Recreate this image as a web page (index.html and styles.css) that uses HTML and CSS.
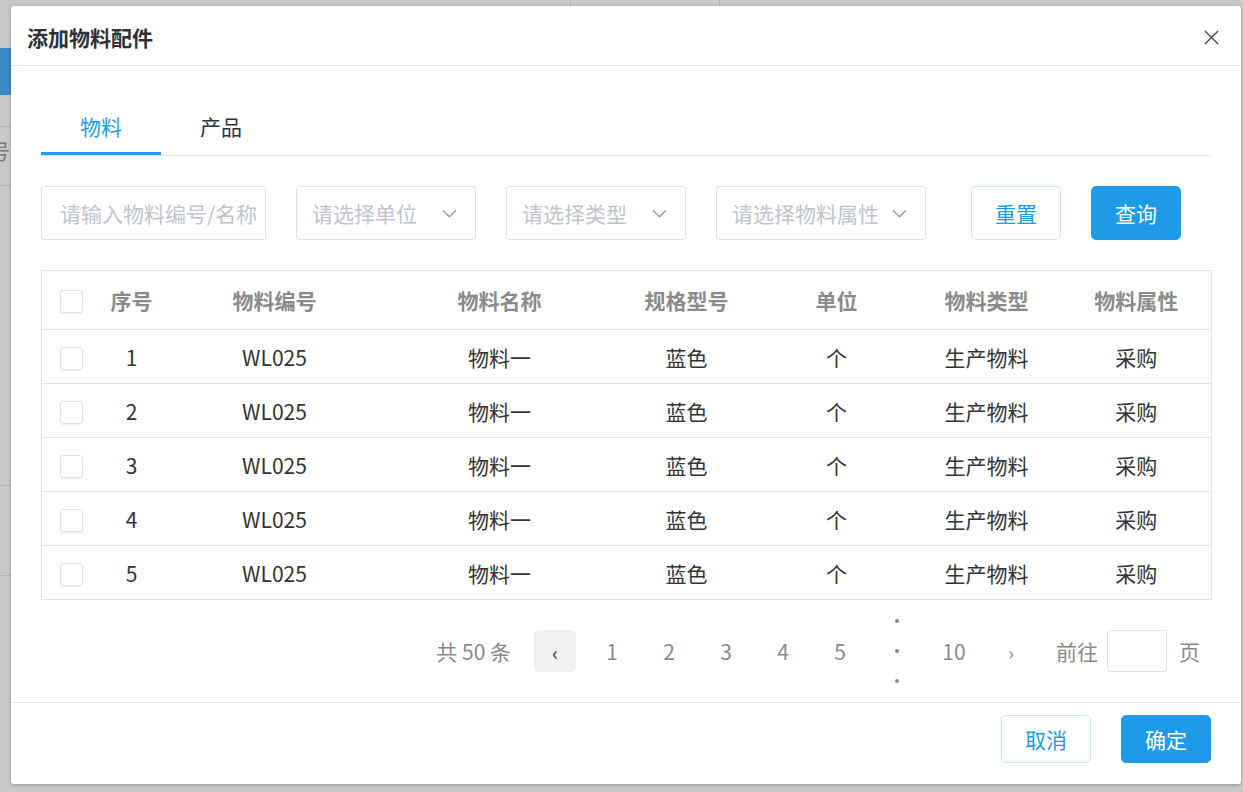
FILE: index.html
```html
<!DOCTYPE html>
<html lang="zh-CN">
<head>
<meta charset="utf-8">
<title>添加物料配件</title>
<link rel="stylesheet" href="styles.css">
</head>
<body>
<div class="backdrop">
  <div class="bg-blue"></div>
  <div class="bg-line bg-l1"></div>
  <div class="bg-text">号</div>
  <div class="bg-line bg-l2"></div>
  <div class="bg-line bg-l3"></div>
  <div class="bg-line bg-l4"></div>
  <div class="bg-vline bg-v1"></div>
  <div class="bg-vline bg-v2"></div>
</div>

<div class="modal">
  <div class="modal-header">
    <div class="modal-title">添加物料配件</div>
    <svg class="close" width="16" height="16" viewBox="0 0 16 16"><path d="M1 1L15 15M15 1L1 15" stroke="#444" stroke-width="1.4" fill="none"/></svg>
  </div>

  <div class="modal-body">
    <div class="tabs">
      <div class="tab active">物料</div>
      <div class="tab">产品</div>
    </div>

    <div class="filters">
      <div class="field w225"><span class="ph">请输入物料编号/名称</span></div>
      <div class="field select w180"><span class="ph">请选择单位</span><svg class="chev" width="16" height="9" viewBox="0 0 16 9"><path d="M1 1L8 8L15 1" stroke="#999" stroke-width="1.3" fill="none"/></svg></div>
      <div class="field select w180"><span class="ph">请选择类型</span><svg class="chev" width="16" height="9" viewBox="0 0 16 9"><path d="M1 1L8 8L15 1" stroke="#999" stroke-width="1.3" fill="none"/></svg></div>
      <div class="field select w210"><span class="ph">请选择物料属性</span><svg class="chev" width="16" height="9" viewBox="0 0 16 9"><path d="M1 1L8 8L15 1" stroke="#999" stroke-width="1.3" fill="none"/></svg></div>
      <div class="btn btn-plain reset">重置</div>
      <div class="btn btn-primary">查询</div>
    </div>

    <table class="grid">
      <colgroup>
        <col class="c-chk"><col class="c-no"><col class="c-code"><col class="c-name"><col class="c-150"><col class="c-150"><col class="c-150"><col class="c-150">
      </colgroup>
      <thead>
        <tr><th><span class="chk"></span></th><th>序号</th><th>物料编号</th><th>物料名称</th><th>规格型号</th><th>单位</th><th>物料类型</th><th>物料属性</th></tr>
      </thead>
      <tbody>
        <tr><td><span class="chk"></span></td><td>1</td><td>WL025</td><td>物料一</td><td>蓝色</td><td>个</td><td>生产物料</td><td>采购</td></tr>
        <tr><td><span class="chk"></span></td><td>2</td><td>WL025</td><td>物料一</td><td>蓝色</td><td>个</td><td>生产物料</td><td>采购</td></tr>
        <tr><td><span class="chk"></span></td><td>3</td><td>WL025</td><td>物料一</td><td>蓝色</td><td>个</td><td>生产物料</td><td>采购</td></tr>
        <tr><td><span class="chk"></span></td><td>4</td><td>WL025</td><td>物料一</td><td>蓝色</td><td>个</td><td>生产物料</td><td>采购</td></tr>
        <tr><td><span class="chk"></span></td><td>5</td><td>WL025</td><td>物料一</td><td>蓝色</td><td>个</td><td>生产物料</td><td>采购</td></tr>
      </tbody>
    </table>

    <div class="pager">
      <span class="total">共 50 条</span>
      <div class="pages">
        <span class="pg prev">‹</span>
        <span class="pg">1</span>
        <span class="pg">2</span>
        <span class="pg">3</span>
        <span class="pg">4</span>
        <span class="pg">5</span>
        <span class="pg dots"><i></i><i></i><i></i></span>
        <span class="pg">10</span>
        <span class="pg next">›</span>
      </div>
      <span class="goto">前往</span>
      <span class="goto-input"></span>
      <span class="goto-suffix">页</span>
    </div>
  </div>

  <div class="modal-footer">
    <div class="btn btn-plain small">取消</div>
    <div class="btn btn-primary small">确定</div>
  </div>
</div>
</body>
</html>
```

FILE: styles.css
```css
* { box-sizing: border-box; }
html, body { margin: 0; padding: 0; }
body {
  width: 1243px;
  height: 792px;
  background: #c9c9c9;
  font-family: "Noto Sans CJK SC", "Noto Sans", sans-serif;
  color: #333;
  overflow: hidden;
  position: relative;
}

/* faded page behind the mask */
.backdrop { position: absolute; inset: 0; }
.bg-blue { position: absolute; left: 0; top: 48px; width: 12px; height: 47px; background: #3a8bc4; border-radius: 0 3px 3px 0; }
.bg-line { position: absolute; left: 0; width: 12px; height: 1px; background: #b5b5b5; }
.bg-l1 { top: 126px; }
.bg-l2 { top: 185px; }
.bg-l3 { top: 485px; }
.bg-l4 { top: 575px; }
.bg-text { position: absolute; left: -11px; top: 137px; font-size: 21px; color: #777; line-height: 26px; }
.bg-vline { position: absolute; top: 0; width: 1px; height: 6px; background: #b3b3b3; }
.bg-v1 { left: 570px; }
.bg-v2 { left: 719px; }

/* modal */
.modal {
  position: absolute;
  left: 11px;
  top: 6px;
  width: 1230px;
  height: 778px;
  background: #fff;
  border-radius: 3px;
  box-shadow: 0 1px 4px rgba(0,0,0,0.25);
  display: flex;
  flex-direction: column;
}
.modal-header {
  height: 60px;
  border-bottom: 1px solid #e6e6e6;
  display: flex;
  align-items: center;
  justify-content: space-between;
  padding: 3px 22px 0 16px;
}
.modal-title { font-size: 21px; font-weight: 700; color: #303133; }
.close { display: block; width: 15px; height: 15px; }

.modal-body { padding: 34px 30px 30px; flex: 1; }

.tabs { display: flex; border-bottom: 1px solid #e4e4e4; }
.tab {
  width: 120px;
  height: 55px;
  border-bottom: 3px solid transparent;
  display: flex;
  align-items: center;
  justify-content: center;
  font-size: 21px;
  color: #303133;
}
.tab.active { color: #1e9be8; border-bottom-color: #1e9be8; }

.filters { display: flex; margin-top: 30px; gap: 30px; align-items: center; }
.field {
  height: 54px;
  border: 1px solid #e2e2e2;
  border-radius: 3px;
  display: flex;
  align-items: center;
  padding: 0 18px 0 18px;
  overflow: hidden;
  white-space: nowrap;
}
.field.select { justify-content: space-between; padding-left: 15px; }
.w225 { width: 225px; }
.w180 { width: 180px; }
.w210 { width: 210px; }
.ph { font-size: 21px; color: #c0c4cc; }
.chev { width: 15px; height: 9px; flex: none; }

.btn {
  width: 90px;
  height: 54px;
  border-radius: 5px;
  display: flex;
  align-items: center;
  justify-content: center;
  font-size: 21px;
}
.btn-plain { border: 1px solid #c8e6fa; color: #1e9be8; background: #fff; }
.btn-primary { background: #1e9be8; color: #fff; border: 1px solid #1e9be8; }
.reset { margin-left: 15px; }
.btn.small { height: 48px; }

.grid {
  margin-top: 30px;
  width: 1170px;
  border-collapse: collapse;
  table-layout: fixed;
  border: 1px solid #e4e4e4;
}
.c-chk { width: 60px; }
.c-no { width: 60px; }
.c-code { width: 226px; }
.c-name { width: 224px; }
.c-150 { width: 150px; }
.grid th, .grid td { text-align: center; padding: 0; font-size: 21px; }
.grid th { height: 59px; color: #8a8a8a; font-weight: 700; border-bottom: 1px solid #e4e4e4; }
.grid td { height: 54px; color: #333; border-bottom: 1px solid #e4e4e4; }
.grid tbody tr:last-child td { border-bottom: none; }
.chk {
  display: inline-block;
  width: 23px;
  height: 23px;
  border: 1px solid #e0e0e0;
  border-radius: 3px;
  box-shadow: 0 1px 2px rgba(0,0,0,0.08);
  vertical-align: middle;
  margin-top: -3px;
}

.pager { display: flex; align-items: center; justify-content: flex-end; margin-top: 30px; height: 42px; padding-right: 11px; color: #8a8a8a; font-size: 21px; }
.total { margin-right: 23px; }
.pages { display: flex; gap: 15px; }
.pg { width: 42px; height: 42px; display: flex; align-items: center; justify-content: center; color: #8a8a8a; font-size: 21px; }
.prev { background: #f0f0f0; border-radius: 5px; color: #333; font-size: 19px; }
.next { font-size: 19px; }
.dots { flex-direction: column; justify-content: space-between; height: 42px; position: relative; }
.dots i { position: absolute; left: 19px; width: 4px; height: 4px; border-radius: 50%; background: #8a8a8a; }
.dots i:nth-child(1) { top: -11px; }
.dots i:nth-child(2) { top: 19px; }
.dots i:nth-child(3) { top: 49px; }
.goto { margin-left: 24px; }
.goto-input { width: 60px; height: 42px; border: 1px solid #e2e2e2; border-radius: 3px; margin-left: 9px; }
.goto-suffix { margin-left: 12px; }

.modal-footer {
  border-top: 1px solid #e6e6e6;
  display: flex;
  justify-content: flex-end;
  gap: 30px;
  padding: 12px 30px 21px;
}
```
